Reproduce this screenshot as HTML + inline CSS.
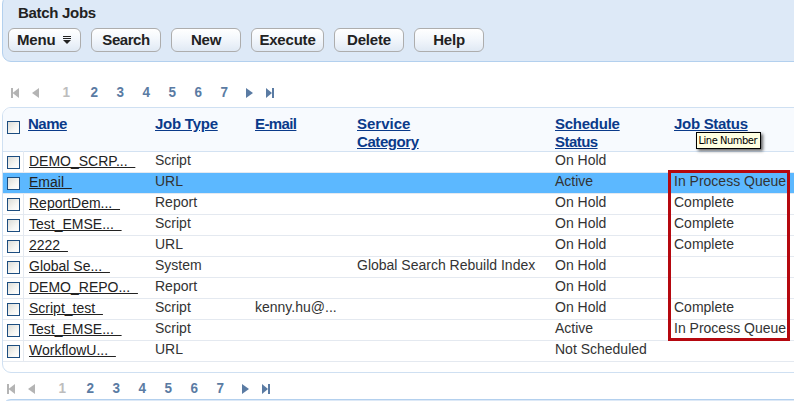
<!DOCTYPE html>
<html>
<head>
<meta charset="utf-8">
<title>Batch Jobs</title>
<style>
html,body{margin:0;padding:0;background:#fff;}
body{width:794px;height:401px;position:relative;overflow:hidden;font-family:"Liberation Sans",sans-serif;font-size:14px;color:#333;}
.abs{position:absolute;white-space:nowrap;}
#panel{position:absolute;left:2px;top:-5px;width:800px;height:67px;background:#dde9f7;border:1px solid #b3d0ee;border-radius:9px 0 0 9px;box-sizing:border-box;}
#title{position:absolute;left:15px;top:9px;font-weight:bold;font-size:15px;letter-spacing:-0.3px;color:#222;line-height:16px;}
.btn{position:absolute;top:28px;height:24px;box-sizing:border-box;border:1px solid #adadad;border-radius:6px;background:linear-gradient(#ffffff 0%,#f3f7fc 45%,#e0e9f4 100%);font-weight:bold;font-size:15px;letter-spacing:-0.2px;color:#222;text-align:center;line-height:22px;}
.pg{position:absolute;font-weight:bold;font-size:15px;color:#5a7ba3;margin-left:1px;transform:scaleX(0.9);transform-origin:50% 50%;line-height:16px;}
.pg.dis{color:#bdbdbd;}
#grid{position:absolute;left:2px;top:107px;width:800px;height:266px;box-sizing:border-box;border:1px solid #cfe0f2;border-radius:9px 0 0 9px;background:#fff;overflow:hidden;}
#ghead{position:absolute;left:0;top:0;width:800px;height:43px;background:#f7fafe;border-bottom:1px solid #d3e2f2;}
.th{position:absolute;font-weight:bold;font-size:15px;color:#0a3a8a;text-decoration:underline;line-height:18px;white-space:nowrap;}
.row{position:absolute;left:0;width:800px;height:21px;box-sizing:border-box;border-bottom:1px solid #e4e9f0;}
.row.sel{background:linear-gradient(#5cb8ff,#5cb8ff) no-repeat 0 0/100% 20px;}
.row span,.row a{position:absolute;top:-1px;line-height:18px;font-size:14px;color:#333;white-space:nowrap;}
.row .n{left:26px;top:0;text-decoration:underline;color:#222;}
.row .t{left:152px;}
.row .e{left:252px;}
.row .c{left:354px;}
.row .s{left:552px;}
.row .j{left:671px;}
.cb{position:absolute;left:4px;width:13px;height:13px;box-sizing:border-box;border:1px solid #1c4d80;background:linear-gradient(135deg,#dcdcd6 0%,#f6f6f3 60%,#ffffff 100%);}
#vline{position:absolute;left:20px;top:43px;width:1px;height:211px;background:#e4e9f0;}
#red{position:absolute;left:668px;top:170px;width:122px;height:171px;box-sizing:border-box;border:3px solid #b5080f;}
#tip{position:absolute;left:696px;top:132px;width:65px;height:17px;box-sizing:border-box;border:1px solid #000;background:#ffffe1;font-family:"DejaVu Sans Condensed","DejaVu Sans","Liberation Sans",sans-serif;font-stretch:condensed;font-size:11px;line-height:16px;color:#000;text-align:left;padding-left:1.5px;box-shadow:2px 2px 3px rgba(0,0,0,0.6);white-space:nowrap;letter-spacing:-0.45px;}
#box2{position:absolute;left:2px;top:399px;width:800px;height:20px;box-sizing:border-box;border:1px solid #b3d0ee;border-radius:9px 0 0 0;background:#dde9f7;}
svg{position:absolute;overflow:visible;}
</style>
</head>
<body>
<div id="panel">
  <div id="title">Batch Jobs</div>
</div>
<div class="btn" style="left:8px;width:73px;text-align:left;padding-left:8px;">Menu
  <svg style="left:54px;top:7px" width="8" height="8" viewBox="0 0 8 8"><rect x="0" y="0" width="8" height="1" fill="#222"/><rect x="0" y="2" width="8" height="1" fill="#222"/><path d="M0 4 L8 4 L4 8 Z" fill="#222"/></svg>
</div>
<div class="btn" style="left:91px;width:70px;letter-spacing:-0.45px;">Search</div>
<div class="btn" style="left:171px;width:70px;">New</div>
<div class="btn" style="left:251px;width:73px;">Execute</div>
<div class="btn" style="left:334px;width:70px;">Delete</div>
<div class="btn" style="left:414px;width:70px;">Help</div>

<!-- top pager -->
<svg style="left:11px;top:88px" width="10" height="10" viewBox="0 0 10 10"><rect x="0" y="0" width="2" height="10" fill="#b4b4b4"/><path d="M8 0 L8 10 L1.5 5 Z" fill="#b4b4b4"/></svg>
<svg style="left:32px;top:88px" width="8" height="10" viewBox="0 0 8 10"><path d="M7 0 L7 10 L0 5 Z" fill="#b4b4b4"/></svg>
<div class="pg dis" style="left:61px;top:84px;">1</div>
<div class="pg" style="left:89px;top:84px;">2</div>
<div class="pg" style="left:115px;top:84px;">3</div>
<div class="pg" style="left:141px;top:84px;">4</div>
<div class="pg" style="left:167px;top:84px;">5</div>
<div class="pg" style="left:193px;top:84px;">6</div>
<div class="pg" style="left:219px;top:84px;">7</div>
<svg style="left:246px;top:88px" width="8" height="10" viewBox="0 0 8 10"><path d="M0 0 L0 10 L7 5 Z" fill="#5a7ba3"/></svg>
<svg style="left:265px;top:88px" width="10" height="10" viewBox="0 0 10 10"><path d="M1 0 L1 10 L7 5 Z" fill="#5a7ba3"/><rect x="7" y="0" width="2" height="10" fill="#5a7ba3"/></svg>

<div id="grid">
  <div id="ghead">
    <div class="cb" style="top:13px;"></div>
    <a class="th" href="#" style="left:25px;top:7px;letter-spacing:-0.5px;">Name</a>
    <a class="th" href="#" style="left:152px;top:7px;letter-spacing:-0.25px;">Job Type</a>
    <a class="th" href="#" style="left:252px;top:7px;letter-spacing:-0.6px;">E-mail</a>
    <a class="th" href="#" style="left:354px;top:7px;"><span>Service</span><br><span style="letter-spacing:-0.42px">Category</span></a>
    <a class="th" href="#" style="left:552px;top:7px;"><span style="letter-spacing:-0.25px">Schedule</span><br><span style="letter-spacing:-0.55px">Status</span></a>
    <a class="th" href="#" style="left:671px;top:7px;letter-spacing:-0.3px;">Job Status</a>
  </div>
  <div id="vline"></div>
  <div class="row" style="top:44px;"><div class="cb" style="top:4px;"></div><a class="n" href="#">DEMO_SCRP...&nbsp;&nbsp;</a><span class="t">Script</span><span class="s">On Hold</span></div>
  <div class="row sel" style="top:65px;"><div class="cb" style="top:4px;"></div><a class="n" href="#">Email&nbsp;&nbsp;</a><span class="t">URL</span><span class="s">Active</span><span class="j">In Process Queue</span></div>
  <div class="row" style="top:86px;"><div class="cb" style="top:4px;"></div><a class="n" href="#">ReportDem...&nbsp;&nbsp;</a><span class="t">Report</span><span class="s">On Hold</span><span class="j">Complete</span></div>
  <div class="row" style="top:107px;"><div class="cb" style="top:4px;"></div><a class="n" href="#">Test_EMSE...&nbsp;&nbsp;</a><span class="t">Script</span><span class="s">On Hold</span><span class="j">Complete</span></div>
  <div class="row" style="top:128px;"><div class="cb" style="top:4px;"></div><a class="n" href="#">2222&nbsp;&nbsp;</a><span class="t">URL</span><span class="s">On Hold</span><span class="j">Complete</span></div>
  <div class="row" style="top:149px;"><div class="cb" style="top:4px;"></div><a class="n" href="#">Global Se...&nbsp;&nbsp;</a><span class="t">System</span><span class="c">Global Search Rebuild Index</span><span class="s">On Hold</span></div>
  <div class="row" style="top:170px;"><div class="cb" style="top:4px;"></div><a class="n" href="#">DEMO_REPO...&nbsp;&nbsp;</a><span class="t">Report</span><span class="s">On Hold</span></div>
  <div class="row" style="top:191px;"><div class="cb" style="top:4px;"></div><a class="n" href="#">Script_test&nbsp;&nbsp;</a><span class="t">Script</span><span class="e">kenny.hu@...</span><span class="s">On Hold</span><span class="j">Complete</span></div>
  <div class="row" style="top:212px;"><div class="cb" style="top:4px;"></div><a class="n" href="#">Test_EMSE...&nbsp;&nbsp;</a><span class="t">Script</span><span class="s">Active</span><span class="j">In Process Queue</span></div>
  <div class="row" style="top:233px;"><div class="cb" style="top:4px;"></div><a class="n" href="#">WorkflowU...&nbsp;&nbsp;</a><span class="t">URL</span><span class="s">Not Scheduled</span></div>
</div>

<div id="tip">Line Number</div>
<div id="red"></div>

<!-- bottom pager -->
<svg style="left:7px;top:384px" width="10" height="10" viewBox="0 0 10 10"><rect x="0" y="0" width="2" height="10" fill="#b4b4b4"/><path d="M8 0 L8 10 L1.5 5 Z" fill="#b4b4b4"/></svg>
<svg style="left:28px;top:384px" width="8" height="10" viewBox="0 0 8 10"><path d="M7 0 L7 10 L0 5 Z" fill="#b4b4b4"/></svg>
<div class="pg dis" style="left:57px;top:380px;">1</div>
<div class="pg" style="left:85px;top:380px;">2</div>
<div class="pg" style="left:111px;top:380px;">3</div>
<div class="pg" style="left:137px;top:380px;">4</div>
<div class="pg" style="left:163px;top:380px;">5</div>
<div class="pg" style="left:189px;top:380px;">6</div>
<div class="pg" style="left:215px;top:380px;">7</div>
<svg style="left:242px;top:384px" width="8" height="10" viewBox="0 0 8 10"><path d="M0 0 L0 10 L7 5 Z" fill="#5a7ba3"/></svg>
<svg style="left:261px;top:384px" width="10" height="10" viewBox="0 0 10 10"><path d="M1 0 L1 10 L7 5 Z" fill="#5a7ba3"/><rect x="7" y="0" width="2" height="10" fill="#5a7ba3"/></svg>

<div id="box2"></div>
</body>
</html>
